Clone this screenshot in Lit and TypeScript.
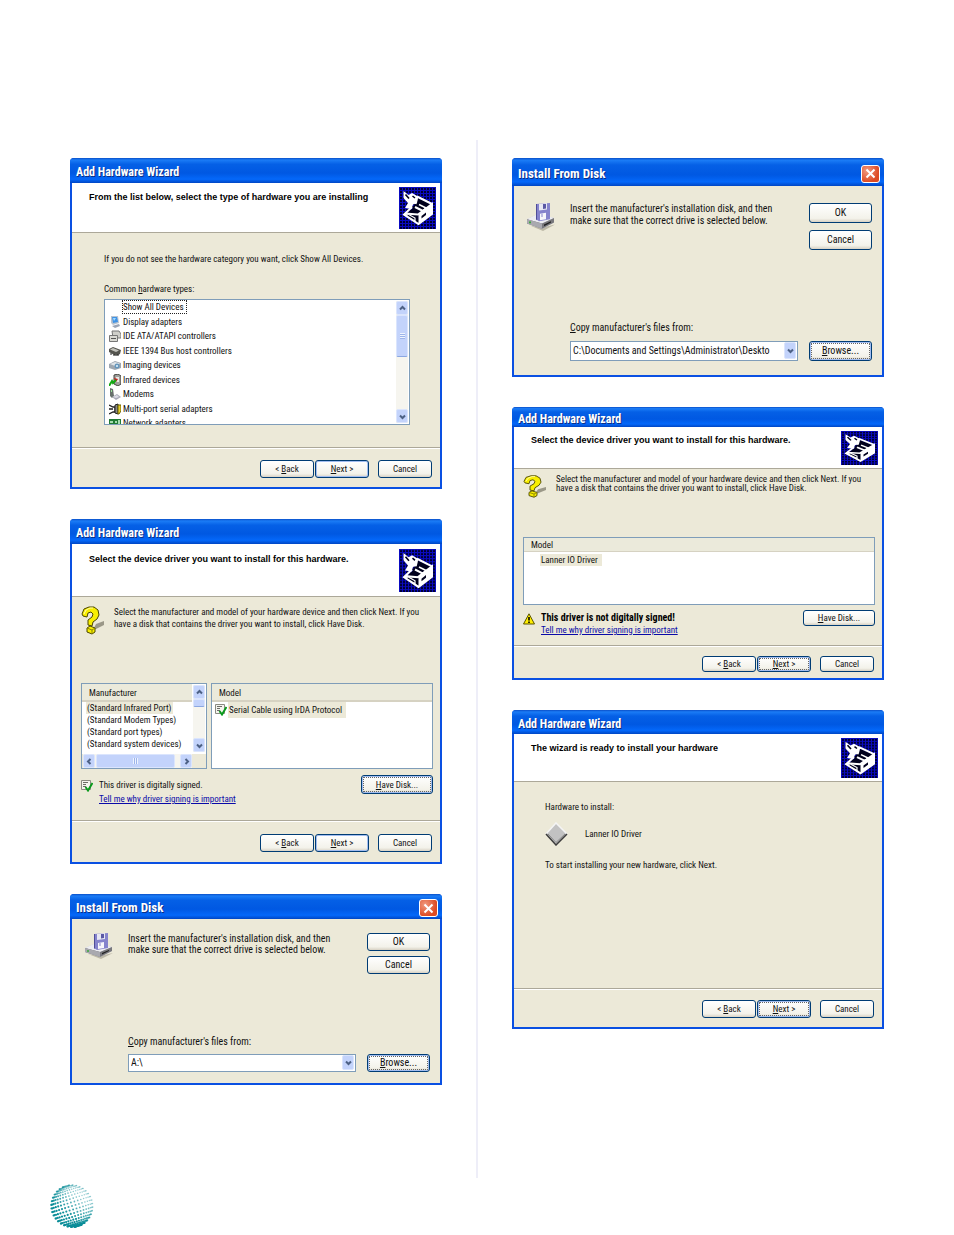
import { LitElement, html, css, svg, TemplateResult } from "lit";
import { customElement } from "lit/decorators.js";

/** Card-and-drawer emblem shown at the right of every wizard header. */
const emblem = () => html`
  <svg class="emblem" viewBox="0 0 37 42" preserveAspectRatio="none" aria-hidden="true">
    <defs>
      <pattern id="grid" width="3" height="3" patternUnits="userSpaceOnUse">
        <rect width="3" height="3" fill="#000030" />
        <path d="M0 .5H3M.5 0V3" stroke="#0a0ac0" stroke-width="1" />
      </pattern>
    </defs>
    <rect width="37" height="42" fill="url(#grid)" />
    <path d="M18 11L32 17V27L20 37L6 28L14 21Z" fill="#00001c" />
    <path d="M4.500 4L9.500 8L13 6L19 9.500L18 16L14 17.500L12.500 22L6 21L9 16L4.500 11Z" fill="#fff" />
    <path d="M6.500 7.500L10 11.500M13.500 9L16 11" stroke="#00001c" stroke-width="1.600" />
    <path d="M18 9.500L33 17M16 20L24 24M13 20L5 27.500L19.500 37L33 27V17L19 27.500L6 26.500M18 10L16.500 17" fill="none" stroke="#fff" stroke-width="2" />
    <path d="M19.500 27.500L33 17V27L19.500 37Z" fill="#fff" />
    <path d="M22.500 29L27 25.500V28L22.500 31.500Z" fill="#00001c" />
    <path d="M8 29L16 34V31L8 26.500Z" fill="#00001c" stroke="#fff" stroke-width="1.200" />
    <path d="M20 17.500L27 21L23 24.500" fill="none" stroke="#fff" stroke-width="1.600" />
  </svg>`;

const question = () => html`
  <svg class="question" viewBox="0 0 24 29" preserveAspectRatio="none" aria-hidden="true">
    <path d="M12 24L15 18L23 15V19L15 23Z" fill="#9b9888" />
    <path d="M1 8L3 3L8 1H13L17 4L18 9L16 13L12 16L11 20L7 19V14L11 11L12 8L10 6L7 7L6 11L2 10Z" fill="#f8ee00" stroke="#4b4600" stroke-width="1" />
    <path d="M3 8L5 4L9 2H12" fill="none" stroke="#fffcae" stroke-width="1" />
    <path d="M6 22L9 20L14 22V26L11 28L6 26Z" fill="#f8ee00" stroke="#4b4600" stroke-width="1" />
    <path d="M6 22L11 24V28M11 24L14 22" fill="none" stroke="#8b8400" stroke-width="1" />
  </svg>`;

const drive = () => html`
  <svg class="drive" viewBox="0 0 28 26" preserveAspectRatio="none" aria-hidden="true">
    <path d="M3 21L16 26L28 20L14 23Z" fill="#bcb8a6" />
    <path d="M0 15L11 10L27 14V18L15 24L0 19Z" fill="#c9c9cf" />
    <path d="M0 15L11 10L27 14L15 19Z" fill="#ededf1" />
    <path d="M0 15L15 19L27 14V18L15 24L0 19Z" fill="#77777c" />
    <path d="M0 15L15 19V24L0 19Z" fill="#a9a9af" />
    <path d="M17 20L24 17V18L17 21.500Z" fill="#222" />
    <circle cx="3" cy="18" r="1" fill="#38a838" />
    <path d="M9 1L23 0V15L12 17L9 15Z" fill="#8583cc" />
    <path d="M9 1L10 1V16L9 15Z" fill="#4f4d98" />
    <path d="M12 1L20 0V6L12 7Z" fill="#e7e7f3" />
    <path d="M16 1L19 1V5L16 5.500Z" fill="#5a58a4" />
    <path d="M13 10L19 9V15L13 16Z" fill="#f7f7fb" />
    <path d="M15 10V13" stroke="#8583cc" stroke-width="1" />
  </svg>`;

const signed = () => html`
  <svg class="mini" viewBox="0 0 12 12" aria-hidden="true">
    <path d="M.5 .5H9.500V9.500H.5Z" fill="#f4f4ee" stroke="#8b8b82" />
    <path d="M2 2.500H7M2 4.500H5M2 6.500H5" stroke="#6d6d66" />
    <path d="M4.500 7L7 10.500L11.500 3" fill="none" stroke="#0a9a1c" stroke-width="2" />
  </svg>`;

const warning = () => html`
  <svg class="mini" viewBox="0 0 12 12" aria-hidden="true">
    <path d="M6 .8L11.500 11H.5Z" fill="#ffee00" stroke="#5a5400" stroke-linejoin="round" />
    <path d="M6 4V7.500M6 8.500V10" stroke="#000" stroke-width="1.600" />
  </svg>`;

const chevron = (dir: "up" | "down" | "left" | "right") => {
  const d = { up: "M2 5.500L4.500 3L7 5.500", down: "M2 3.500L4.500 6L7 3.500", left: "M5.500 2L3 4.500L5.500 7", right: "M3.500 2L6 4.500L3.500 7" }[dir];
  return html`<svg class="chev" viewBox="0 0 9 9" aria-hidden="true"><path d=${d} fill="none" stroke="#4d6185" stroke-width="2" /></svg>`;
};

const deviceIcons: Record<string, TemplateResult> = {
  display: svg`<path d="M2 0H9L10 7L4 9L2 7Z" fill="#b9c3cf"/><path d="M3 1H8L9 6L4 7Z" fill="#3f93e6"/><path d="M4 2L7 2L5 5Z" fill="#a6dcff"/><path d="M3 10L10 8L11 10L6 12Z" fill="#9ca5b5"/>`,
  ide: svg`<path d="M3 1H10L12 4V8H4Z" fill="#cfcfca" stroke="#777"/><path d="M.5 5.500H8.500V11.500H.5Z" fill="#dadad4" stroke="#777"/><path d="M2 8.500H7" stroke="#555"/>`,
  bus: svg`<path d="M0 4L4 2L12 5L11 9L7 11L0 7Z" fill="#55554f"/><path d="M1 4.500L4 3L10 5.500L7 7Z" fill="#c2c2bb"/><path d="M2 8V10M5 9V11M9 9V11" stroke="#222"/>`,
  imaging: svg`<path d="M0 5L6 2L12 4V9L6 11L0 9Z" fill="#9ea7b0"/><path d="M1 5L6 3L11 4.500L6 7Z" fill="#dfe4e8"/><circle cx="8" cy="7" r="2.500" fill="#6596bc"/><circle cx="8" cy="7" r="1" fill="#e2f4ff"/>`,
  infrared: svg`<path d="M5 1L9 0L12 2V10L9 12L5 10Z" fill="#a0a09d" stroke="#44443f"/><path d="M7 3H10V8H7Z" fill="#e8e8e4"/><path d="M5 4L9 5L7 8Z" fill="#d41616"/><path d="M0 12L3 7L4 9L7 6" fill="none" stroke="#13a813" stroke-width="2"/>`,
  modem: svg`<path d="M1 0L4 1L5 8L3 10L1 8Z" fill="#67706c"/><path d="M2 2H3V4H2Z" fill="#9be09b"/><path d="M3 9L8 6L12 9L7 12Z" fill="#a9aab8"/><path d="M4 9L8 7L10 9L7 10Z" fill="#dcdce6"/>`,
  serial: svg`<path d="M0 2L4 4H6V9H4L0 11M0 6H4" fill="none" stroke="#222" stroke-width="1.300"/><path d="M6 2L9 1V11L6 10Z" fill="#888" stroke="#222"/><path d="M9 2H12V8L10 11H9Z" fill="#e8d22c" stroke="#6b6000"/>`,
  network: svg`<path d="M0 2H12V10H0Z" fill="#1f7a34"/><path d="M1 4H4V6H1ZM6 4H8V6H6ZM9 3H11V7H9Z" fill="#a7dbb0"/><path d="M0 8H12" stroke="#0b4718"/>`,
};

const devices: [string, string][] = [
  ["", "Show All Devices"],
  ["display", "Display adapters"],
  ["ide", "IDE ATA/ATAPI controllers"],
  ["bus", "IEEE 1394 Bus host controllers"],
  ["imaging", "Imaging devices"],
  ["infrared", "Infrared devices"],
  ["modem", "Modems"],
  ["serial", "Multi-port serial adapters"],
  ["network", "Network adapters"],
];

const key = (letter: string, rest: string, before = "") => html`${before}<u>${letter}</u>${rest}`;

@customElement("app-root")
export class AppRoot extends LitElement {
  static styles = css`
    :host { display: block; background: #fff; color: #111; --ui: "Roboto Condensed", "Roboto", "Liberation Sans", sans-serif; font: 9px/12px var(--ui); }
    * { box-sizing: border-box; }
    h2, h3, p, ul { margin: 0; padding: 0; font: inherit; }
    svg { display: block; flex: none; }
    u { text-decoration: underline; text-underline-offset: 1px; }
    .page { padding: 140px 70px 0; }
    .columns { display: grid; grid-template-columns: minmax(0, 1fr) 2px minmax(0, 1fr); column-gap: 34px; min-height: 1038px; }
    .rule { background: #eeeef8; }
    .col { display: flex; flex-direction: column; gap: 30px; padding-top: 18px; }
    footer { padding: 6px 0 7px 50px; }
    .globe { width: 44px; height: 44px; }

    .win { background: #0a50e2; padding: 0 2px 2px; border-radius: 4px 4px 0 0; }
    .bar { display: flex; align-items: center; justify-content: space-between; height: 25px; margin: 0 -2px; padding: 3px 4px 0 6px; border-radius: 4px 4px 0 0;
      background: linear-gradient(#0a4fc8 0, #1b7cf6 8%, #0560e6 25%, #0058e2 60%, #0468fa 85%, #0046c4 100%); color: #fff; }
    .bar h2 { font: bold 12px/16px var(--ui); text-shadow: 1px 1px #0c2f86; white-space: nowrap; }
    .disk .bar h2 { font-size: 13px; }
    .close { width: 19px; height: 18px; padding: 0; border: 1px solid #fff; border-radius: 3px; background: radial-gradient(circle at 30% 30%, #f09a80, #dd4a22 70%); display: grid; place-items: center; }
    .tall .bar { height: 28px; }
    .unsigned .bar { height: 20px; }
    .ready .bar { height: 24px; }

    .head { display: flex; justify-content: space-between; background: #fff; padding: 4px 4px 3px 17px; border-bottom: 1px solid #aca899; }
    .head h3 { font: bold 9px/12px "Liberation Sans", sans-serif; color: #000; margin-top: 4px; }
    .emblem { width: 37px; height: 42px; }
    .driver .head { padding-top: 5px; padding-bottom: 4px; }
    .driver .emblem { height: 43px; }
    .unsigned .head h3 { margin-top: 3px; }
    .unsigned .emblem { height: 34px; }
    .ready .emblem { height: 40px; }

    .body { background: #ece9d8; }
    .foot { display: flex; justify-content: flex-end; background: #ece9d8; border-top: 1px solid #aca899; box-shadow: inset 0 1px #fff; padding: 12px 8px 9px; gap: 1px; }
    .foot .cancel { margin-left: 8px; }
    .driver .foot { padding-top: 13px; padding-bottom: 10px; }
    .unsigned .foot { padding: 10px 8px 6px; }
    .ready .foot { padding-top: 11px; }

    .btn { font: 9px/12px var(--ui); color: #111; width: 54px; height: 18px; padding: 0; border: 1px solid #003c74; border-radius: 3px; background: linear-gradient(#fff, #f3f2ea 80%, #d8d2c4); white-space: nowrap; }
    .btn.default { box-shadow: inset 0 0 0 1px #a2bdf0; }
    .btn.focus { box-shadow: inset 0 0 0 1px #a2bdf0; outline: 1px dotted #666; outline-offset: -3px; }
    .btn.wide { width: 72px; height: 19px; }
    .unsigned .btn { height: 16px; }
    .disk .btn { width: 100%; font-size: 10px; }
    .tall .btn { height: 20px; }

    .types .body { padding: 20px 30px 22px 32px; }
    .types .label { margin-top: 18px; margin-bottom: 4px; }
    .listbox { display: flex; justify-content: space-between; height: 126px; background: #fff; border: 1px solid #7f9db9; overflow: hidden; }
    .listbox ul { list-style: none; flex: 1; height: 130px; padding: 0 0 0 4px; display: flex; flex-direction: column; justify-content: space-between; }
    .listbox li { display: grid; grid-template-columns: 12px auto; justify-content: start; align-items: center; column-gap: 1px; height: 14px; }
    .listbox li svg, .listbox li i { width: 12px; height: 12px; }
    .listbox li span { line-height: 12px; border: 1px solid transparent; padding-right: 2px; }
    .listbox li .picked { border: 1px dotted #222; }

    .scroll { display: flex; flex-direction: column; width: 12px; margin: 1px; background: #f6f5ef; }
    .scroll.flat { flex-direction: row; width: auto; height: 14px; }
    .flat-row { padding-right: 13px; background: #ece9d8; }
    .sbtn, .thumb { display: grid; place-items: center; flex: none; border: 1px solid #dbe5fd; border-radius: 2px; background: #c3d3fb; }
    .sbtn { width: 12px; height: 14px; }
    .chev { width: 9px; height: 9px; }
    .thumb { height: 42px; margin-bottom: auto; border-bottom-color: #8ba7e2; }
    .thumb::after { content: ""; width: 5px; height: 6px; background: repeating-linear-gradient(#eef4fe 0 1px, #9db4ea 1px 2px); }
    .thumb.short { height: 8px; }
    .thumb.short::after { display: none; }
    .flat .thumb { width: 79px; height: 14px; margin: 0 auto 0 1px; border-bottom-color: #dbe5fd; }
    .flat .thumb::after { background: repeating-linear-gradient(90deg, #eef4fe 0 1px, #9db4ea 1px 2px); }

    .driver .body { padding: 9px 7px 14px 9px; }
    .unsigned .body { padding: 6px 7px 9px 9px; }
    .intro { display: flex; gap: 9px; }
    .question { width: 24px; height: 29px; }
    .unsigned .question { height: 23px; }
    .unsigned .intro { line-height: 9px; }
    .lists { display: grid; grid-template-columns: 126px minmax(0, 1fr); gap: 4px; margin-top: 48px; }
    .pane { height: 86px; background: #fff; border: 1px solid #7f9db9; overflow: hidden; }
    .pane .row { display: flex; height: 69px; }
    .pane table { border-spacing: 0; align-self: flex-start; width: 100%; }
    .pane th { text-align: left; font-weight: normal; height: 18px; padding: 2px 7px 0; background: #ebeadb; border-bottom: 2px solid #d6d2c2; }
    .pane td { height: 12px; padding: 0 4px; line-height: 12px; white-space: nowrap; }
    .pane td span { display: inline-block; padding: 0 2px 0 1px; }
    .pane td .picked { background: #ece9d8; }
    .model td { height: 16px; padding: 0 3px; }
    .model td div { display: flex; align-items: center; gap: 1px; }
    .model td .picked { line-height: 16px; padding-right: 4px; }
    .unsigned .pane { height: 68px; margin-top: 39px; }
    .unsigned .pane th { height: 14px; padding-top: 0; border-bottom-width: 1px; }
    .unsigned .pane td { padding: 0 16px; }
    .unsigned .pane td .picked { line-height: 12px; }
    .mini { width: 12px; height: 12px; }
    .sign { display: flex; align-items: flex-start; gap: 6px; margin-top: 6px; line-height: 14px; }
    .sign .mini { margin-top: 5px; }
    .sign .what { flex: 1; padding-top: 3px; }
    .unsigned .sign { margin-top: 5px; line-height: 12px; }
    .unsigned .sign .mini { margin-top: 3px; }
    .unsigned .sign .what { padding-top: 2px; }
    .sign strong { font: bold 10px/12px var(--ui); color: #000; }
    a { color: #0a0aa8; text-decoration: underline; text-underline-offset: 1px; }

    .disk .body { display: grid; grid-template-columns: 28px minmax(0, 1fr) 63px; column-gap: 15px; padding: 14px 10px 11px 13px; font-size: 10px; line-height: 11px; }
    .disk .top, .disk .bottom { display: grid; grid-column: 2 / 4; grid-template-columns: minmax(0, 1fr) 63px; column-gap: 11px; }
    .drive { width: 28px; height: 26px; }
    .stack { display: flex; flex-direction: column; gap: 5px; }
    .disk .bottom { margin-top: 62px; row-gap: 6px; }
    .disk .bottom label { grid-column: 1 / 3; line-height: 12px; }
    .combo { display: grid; height: 18px; background: #fff; border: 1px solid #7f9db9; grid-template-columns: minmax(0, 1fr) 14px; }
    .combo select { grid-area: 1 / 1 / 2 / 3; appearance: none; width: 100%; border: 0; background: transparent; font: 10px/14px var(--ui); color: #111; padding: 0 16px 0 2px; overflow: hidden; }
    .combo .sbtn { grid-area: 1 / 2; height: auto; margin: 0 1px 1px; pointer-events: none; }
    .tall .body { padding: 17px 10px 14px 13px; line-height: 12px; }
    .tall .drive { height: 28px; }
    .tall .stack { gap: 7px; }
    .tall .bottom { margin-top: 72px; row-gap: 7px; }
    .tall .combo { height: 20px; }

    .ready .body { padding: 19px 31px 117px; }
    .item { display: flex; align-items: center; gap: 17px; margin: 9px 0 13px; }
    .diamond { width: 23px; height: 24px; }
  `;

  private footer(focusNext = false) {
    return html`<div class="foot">
      <button class="btn">${key("B", "ack", "< ")}</button>
      <button class="btn ${focusNext ? "focus" : "default"}">${key("N", "ext >")}</button>
      <button class="btn cancel">Cancel</button>
    </div>`;
  }

  private wizard(kind: string, heading: string, body: unknown, focusNext = false) {
    return html`<section class="win ${kind}">
      <div class="bar"><h2>Add Hardware Wizard</h2></div>
      <div class="head"><h3>${heading}</h3>${emblem()}</div>
      <div class="body">${body}</div>
      ${this.footer(focusNext)}
    </section>`;
  }

  private disk(id: string, path: string, tall = false) {
    return html`<section class="win disk ${tall ? "tall" : ""}">
      <div class="bar">
        <h2>Install From Disk</h2>
        <button class="close" aria-label="Close"><svg width="11" height="11" viewBox="0 0 11 11"><path d="M1.500 1.500L9.500 9.500M9.500 1.500L1.500 9.500" stroke="#fff" stroke-width="2" /></svg></button>
      </div>
      <div class="body">
        ${drive()}
        <div class="top">
          <p>Insert the manufacturer's installation disk, and then<br />make sure that the correct drive is selected below.</p>
          <div class="stack"><button class="btn">OK</button><button class="btn">Cancel</button></div>
        </div>
        <div class="bottom">
          <label for=${id}>${key("C", "opy manufacturer's files from:")}</label>
          <div class="combo"><select id=${id}><option>${path}</option></select><span class="sbtn">${chevron("down")}</span></div>
          <button class="btn focus">${key("B", "rowse...")}</button>
        </div>
      </div>
    </section>`;
  }

  private intro() {
    return html`<div class="intro">${question()}
      <p>Select the manufacturer and model of your hardware device and then click Next. If you<br />have a disk that contains the driver you want to install, click Have Disk.</p>
    </div>`;
  }

  private sign(icon: unknown, text: unknown, focus: boolean) {
    return html`<div class="sign">${icon}
      <div class="what"><p>${text}</p><a href="#signing">Tell me why driver signing is important</a></div>
      <button class="btn wide ${focus ? "focus" : ""}">${key("H", "ave Disk...")}</button>
    </div>`;
  }

  /** Dotted sphere: a tilted latitude/longitude lattice, darker towards the lower left. */
  private globe() {
    const dots = [];
    const tilt = -0.3;
    for (let v = -80; v <= 80; v += 10)
      for (let u = -80; u <= 80; u += 10) {
        const a = (u * Math.PI) / 180, b = (v * Math.PI) / 180;
        const x0 = Math.sin(a) * Math.cos(b), y0 = Math.sin(b);
        const x = x0 * Math.cos(tilt) - y0 * Math.sin(tilt), y = x0 * Math.sin(tilt) + y0 * Math.cos(tilt);
        const shade = Math.max(0.4, Math.min(1, 0.75 - x * 0.3 + y * 0.4));
        dots.push(svg`<circle cx=${(22 + x * 21).toFixed(1)} cy=${(22 + y * 21).toFixed(1)} r=${(0.5 + shade * 0.6).toFixed(2)} fill="#0a8d98" fill-opacity=${shade.toFixed(2)} />`);
      }
    return html`<svg class="globe" viewBox="0 0 44 44" aria-hidden="true">${dots}</svg>`;
  }

  render() {
    return html`
      <main class="page"><div class="columns">
        <div class="col">
          ${this.wizard("types", "From the list below, select the type of hardware you are installing", html`
            <p>If you do not see the hardware category you want, click Show All Devices.</p>
            <p class="label">${key("h", "ardware types:", "Common ")}</p>
            <div class="listbox">
              <ul>${devices.map(([icon, name]) => html`<li>
                ${icon ? html`<svg viewBox="0 0 12 12" aria-hidden="true">${deviceIcons[icon]}</svg>` : html`<i></i>`}
                <span class=${icon ? "" : "picked"}>${name}</span></li>`)}</ul>
              <div class="scroll"><span class="sbtn">${chevron("up")}</span><span class="thumb"></span><span class="sbtn">${chevron("down")}</span></div>
            </div>`)}
          ${this.wizard("driver", "Select the device driver you want to install for this hardware.", html`
            ${this.intro()}
            <div class="lists">
              <div class="pane">
                <div class="row">
                  <table>
                    <tr><th>Manufacturer</th></tr>
                    ${["(Standard Infrared Port)", "(Standard Modem Types)", "(Standard port types)", "(Standard system devices)"].map((m, i) =>
                      html`<tr><td><span class=${i ? "" : "picked"}>${m}</span></td></tr>`)}
                  </table>
                  <div class="scroll"><span class="sbtn">${chevron("up")}</span><span class="thumb short"></span><span class="sbtn">${chevron("down")}</span></div>
                </div>
                <div class="flat-row"><div class="scroll flat"><span class="sbtn">${chevron("left")}</span><span class="thumb"></span><span class="sbtn">${chevron("right")}</span></div></div>
              </div>
              <div class="pane model">
                <table>
                  <tr><th>Model</th></tr>
                  <tr><td><div>${signed()}<span class="picked">Serial Cable using IrDA Protocol</span></div></td></tr>
                </table>
              </div>
            </div>
            ${this.sign(signed(), "This driver is digitally signed.", true)}`)}
          ${this.disk("pathA", "A:\\")}
        </div>
        <div class="rule"></div>
        <div class="col">
          ${this.disk("pathC", "C:\\Documents and Settings\\Administrator\\Deskto", true)}
          ${this.wizard("unsigned", "Select the device driver you want to install for this hardware.", html`
            ${this.intro()}
            <div class="pane model">
              <table>
                <tr><th>Model</th></tr>
                <tr><td><span class="picked">Lanner IO Driver</span></td></tr>
              </table>
            </div>
            ${this.sign(warning(), html`<strong>This driver is not digitally signed!</strong>`, false)}`, true)}
          ${this.wizard("ready", "The wizard is ready to install your hardware", html`
            <p>Hardware to install:</p>
            <div class="item">
              <svg class="diamond" viewBox="0 0 23 24" aria-hidden="true">
                <path d="M11 1L22 12L11 23L1 12Z" fill="#c2c2c2" />
                <path d="M1 12L11 1L22 12" fill="none" stroke="#f4f4f4" stroke-width="1.500" />
                <path d="M1 12L11 23L22 12" fill="none" stroke="#3c3c3c" stroke-width="1.500" />
                <path d="M3 12L11 20.500L20 12" fill="none" stroke="#8a8a8a" />
              </svg>
              <span>Lanner IO Driver</span>
            </div>
            <p>To start installing your new hardware, click Next.</p>`, true)}
        </div>
      </div></main>
      <footer>${this.globe()}</footer>`;
  }
}
